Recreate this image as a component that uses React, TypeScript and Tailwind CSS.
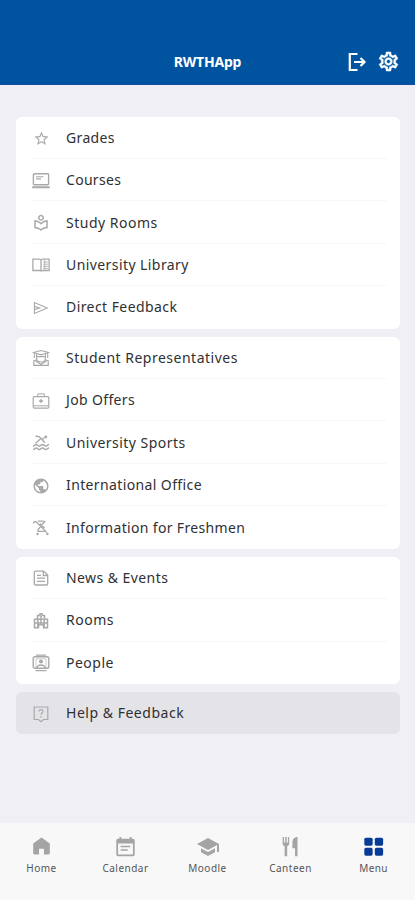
import React from "react";
import {
  MdStarOutline, MdOutlineLocalLibrary, MdPublic, MdOutlineSettings, MdSchool,
} from "react-icons/md";

type IconProps = { className?: string };
type Item = { label: string; tracking: string; Icon: React.ComponentType<IconProps> };

function Svg({ className, children }: IconProps & { children: React.ReactNode }) {
  return (
    <svg viewBox="0 0 18 18" className={className} fill="none" stroke="currentColor" strokeWidth="1.3">
      {children}
    </svg>
  );
}

const Star = () => <MdStarOutline className="size-[17px]" />;
const Reader = () => <MdOutlineLocalLibrary className="size-[18px]" />;
const Globe = () => <MdPublic className="size-[18px]" />;

const News = () => (
  <Svg className="size-[18px]">
    <path d="M2.300 3.300c0-.7.500-1.200 1.200-1.200h8.300l3.900 4v8.700c0 .7-.5 1.200-1.200 1.200h-11c-.7 0-1.200-.5-1.200-1.200zM11.300 2.300v4.200h4.200" />
    <path d="M5 6.300h4M5 9.200h8M5 12.300h8" strokeWidth="1.300" />
  </Svg>
);
const Help = () => (
  <Svg className="size-[18px]">
    <path d="M2.200 2h13.600v12.500h-4.300L9 16.700l-2.500-2.200H2.200z" strokeWidth="1.200" />
    <path d="M7 6.400C7.100 3.900 11 4 11 6.300c0 1.600-2 1.700-2 3.400" strokeWidth="1.200" />
    <path d="M9 11v1.500" strokeWidth="1.300" />
  </Svg>
);
const Laptop = () => (
  <Svg className="size-[18px]">
    <rect x="1.400" y="1.800" width="15.200" height="11" rx="1" strokeWidth="1.400" />
    <path d="M4 4.800h7.500M4 6.900h5" strokeWidth="1.100" />
    <path d="M.2 15.200h17.600" strokeWidth="2" />
  </Svg>
);
const Book = () => (
  <Svg className="size-[18px]">
    <path d="M.9 3.200h6.300c1 0 1.800.5 1.800 1.300 0-.8.800-1.300 1.800-1.300h6.300v11.300h-6.300c-1 0-1.800.3-1.800 1 0-.7-.8-1-1.800-1H.9zM9 4.200v11" />
    <path d="M11 6h5M11 8.200h5M11 10.400h5M11 12.400h5M12.800 3.800v10" strokeWidth=".8" />
  </Svg>
);
const Send = () => (
  <Svg className="size-[18px]">
    <path d="M2.400 3.600v10.800L15.200 9zM2.400 7.400 7.600 9l-5.200 1.600" strokeWidth="1.100" />
  </Svg>
);
const Student = () => (
  <Svg className="size-[18px]">
    <path d="M1.500 3.500 9 1.500l7.500 2L9 5.800zM2.300 4v5M15.700 4v5M4.600 5v4.200C4.600 11.500 6.600 13 9 13s4.400-1.500 4.400-3.800V5" strokeWidth="1.100" />
    <path d="M5 7.600h8M5 10.800 1.800 11.800v4.500h14.400v-4.500L13 10.800M3.500 12 9 15.300l5.500-3.300" strokeWidth="1.200" />
  </Svg>
);
const Briefcase = () => (
  <Svg className="size-[18px]">
    <rect x="1.200" y="4.700" width="15.600" height="11.400" rx="1" strokeWidth="1.200" />
    <path d="M5.700 4.500V1.900h6.600v2.600M1.500 13.800h15" strokeWidth="1" />
    <path d="M9 7.200v3.600M7 9h4" strokeWidth="1.700" />
  </Svg>
);
const Swim = () => (
  <Svg className="size-[18px]">
    <path d="M3.500 2 7.500 2.800l5.500 6M8.500 5 3.500 9.200M10.500 5.300l2-1.800" strokeWidth="1.400" />
    <circle cx="13.800" cy="3" r="1.400" fill="currentColor" stroke="none" />
    <path d="M1 12.200c1.700 0 1.700-1.700 3.200-1.700s1.600 1.700 3.200 1.700 1.600-1.700 3.200-1.700 1.600 1.700 3.200 1.700 1.600-1.700 3.200-1.700M1 15.600c1.700 0 1.700-1.700 3.200-1.700s1.600 1.700 3.200 1.700 1.600-1.700 3.200-1.700 1.600 1.700 3.200 1.700 1.600-1.700 3.200-1.700" strokeWidth="1.500" />
  </Svg>
);
const Stroller = () => (
  <Svg className="size-[18px]">
    <path d="M1.500 4.500c.4-2 1.800-2.500 3-1.500L14.800 13.500M6 2.200h5.500M13 2 6 10.800v1.500h6.500M8 4.500l4.500 4.500M11 3.500l2.200-.8" strokeWidth="1.300" />
    <circle cx="5.500" cy="15" r="1.200" fill="currentColor" stroke="none" />
    <circle cx="15.400" cy="15" r="1.200" fill="currentColor" stroke="none" />
  </Svg>
);
const Building = () => (
  <Svg className="size-[18px]">
    <path d="M2.500 15.700V7.200h3V3.600H8V1.800h2v1.800h2.500v3.600h3v8.500h-4v-3h-5v3zM5.500 7.200h7M2.500 11h13M5.800 7v8M9 4v8.500M12.200 7v8" strokeWidth="1.500" />
  </Svg>
);
const Contact = () => (
  <Svg className="size-[18px]">
    <rect x="1.200" y="2.800" width="15.600" height="11.500" rx="1.800" strokeWidth="1.400" />
    <path d="M4 1.200h10M3.500 16.700h11M5 14c.4-4 7.600-4 8 0" strokeWidth="1.300" />
    <circle cx="9" cy="7.600" r="2" fill="currentColor" stroke="none" />
    <path d="M4 14V4.800h10V14" strokeWidth=".6" />
  </Svg>
);

const GROUPS: Item[][] = [
  [
    { label: "Grades", tracking: "tracking-[0.35px]", Icon: Star },
    { label: "Courses", tracking: "tracking-[0.3px]", Icon: Laptop },
    { label: "Study Rooms", tracking: "tracking-[0.5px]", Icon: Reader },
    { label: "University Library", tracking: "tracking-[0.42px]", Icon: Book },
    { label: "Direct Feedback", tracking: "tracking-[0.43px]", Icon: Send },
  ],
  [
    { label: "Student Representatives", tracking: "tracking-[0.5px]", Icon: Student },
    { label: "Job Offers", tracking: "tracking-[0.35px]", Icon: Briefcase },
    { label: "University Sports", tracking: "tracking-[0.46px]", Icon: Swim },
    { label: "International Office", tracking: "tracking-[0.38px]", Icon: Globe },
    { label: "Information for Freshmen", tracking: "tracking-[0.33px]", Icon: Stroller },
  ],
  [
    { label: "News & Events", tracking: "tracking-[0.43px]", Icon: News },
    { label: "Rooms", tracking: "tracking-[0.5px]", Icon: Building },
    { label: "People", tracking: "tracking-[0.5px]", Icon: Contact },
  ],
  [{ label: "Help & Feedback", tracking: "tracking-[0.52px]", Icon: Help }],
];

function Group({ items, active }: { items: Item[]; active: boolean }) {
  return (
    <section className={`overflow-hidden rounded-[6px] ${active ? "bg-[#e4e3e8]" : "bg-white"}`}>
      {items.map(({ label, tracking, Icon }, i) => (
        <div key={label} className="flex h-[42.43px] flex-col pl-4 pr-[13px]">
          <div className="flex flex-1 items-center gap-4 pt-px">
            <span className="flex w-[18px] justify-center pt-px text-[#a9a9ab]"><Icon /></span>
            <span className={`whitespace-nowrap text-[14px] leading-5 text-[#303032] ${tracking}`}>{label}</span>
          </div>
          <div className={`h-px ${i < items.length - 1 ? "bg-[#f7f7f8]" : ""}`} />
        </div>
      ))}
    </section>
  );
}

const TABS = [
  {
    label: "Home", tracking: "tracking-[0.5px]",
    icon: <path d="M12 1.800 2.500 8.500v11c0 .9.600 1.500 1.500 1.500h5.200v-6.500h5.600V21H20c.9 0 1.500-.6 1.500-1.500v-11z" />,
  },
  {
    label: "Calendar", tracking: "tracking-[0.5px]",
    icon: <path fillRule="evenodd" d="M5 1h2.200v2h9.600V1H19v2h1.500c1.100 0 2 .9 2 2v16c0 1.100-.9 2-2 2h-17c-1.100 0-2-.9-2-2V5c0-1.100.9-2 2-2H5zM3.500 8.500v12.700h17V8.500zM6.500 11h11v1.800h-11zm0 4h8v1.800h-8z" />,
  },
  { label: "Moodle", tracking: "tracking-[0.5px]", icon: null },
  {
    label: "Canteen", tracking: "tracking-[0.5px]",
    icon: <path d="M3 1h1.500v6.500h1.400V1h1.700v6.500H9V1h1.500v7.500c0 1.700-1 2.700-2.300 3.100V23H5.300V11.600C4 11.200 3 10.200 3 8.500zM20 1v22h-2.800v-9h-3V7c0-3.500 2.400-6 5.800-6z" />,
  },
  {
    label: "Menu", tracking: "tracking-[0.4px]",
    icon: <><rect x="1.500" y="2" width="9.500" height="9" rx="1.800" /><rect x="13.500" y="2" width="9.500" height="9" rx="1.800" /><rect x="1.500" y="13.500" width="9.500" height="9" rx="1.800" /><rect x="13.500" y="13.500" width="9.500" height="9" rx="1.800" /></>,
  },
];

export default function App() {
  return (
    <div className="flex h-[900px] w-[415px] flex-col overflow-hidden bg-[#f0eff5] font-['Noto_Sans',sans-serif]">
      <header className="grid h-[85px] shrink-0 grid-cols-[1fr_auto_1fr] items-end border-b border-[#174c9a] bg-[#00549f] pb-2.5 text-white">
        <span />
        <h1 className="text-[14px] font-bold leading-6 tracking-[-0.2px]">RWTHApp</h1>
        <div className="flex items-center justify-end gap-2.5 pb-px pr-[15px]">
          <svg viewBox="0 0 20 20" className="size-5" fill="none" stroke="currentColor" strokeWidth="2.200">
            <path d="M10.500 2H2.800v16h7.700M7 10h10.500M13.500 6l4 4-4 4" />
          </svg>
          <MdOutlineSettings className="size-[23px] [&>path:first-child]:stroke-none [&>path:last-child]:stroke-current [&>path:last-child]:stroke-[0.5]" />
        </div>
      </header>
      <main className="flex flex-1 flex-col gap-2 pl-4 pr-[15.5px] pt-[31.5px]">
        {GROUPS.map((items, i) => <Group key={i} items={items} active={i === 3} />)}
      </main>
      <nav className="flex h-[77px] shrink-0 bg-[#f8f8f8] pt-[13px]">
        {TABS.map(({ label, tracking, icon }) => (
          <div key={label} className={`flex w-[83px] flex-col items-center ${label === "Calendar" ? "pl-0.5" : ""} ${label === "Menu" ? "text-[#073b98]" : "text-[#a4a4a5]"}`}>
            {icon ? <svg viewBox="0 0 24 24" fill="currentColor" className="size-[21px]">{icon}</svg> : <MdSchool className="-my-[1.5px] size-[24px]" />}
            <span className={`mt-[3px] text-[10px] leading-4 text-[#555557] ${tracking}`}>{label}</span>
          </div>
        ))}
      </nav>
    </div>
  );
}
